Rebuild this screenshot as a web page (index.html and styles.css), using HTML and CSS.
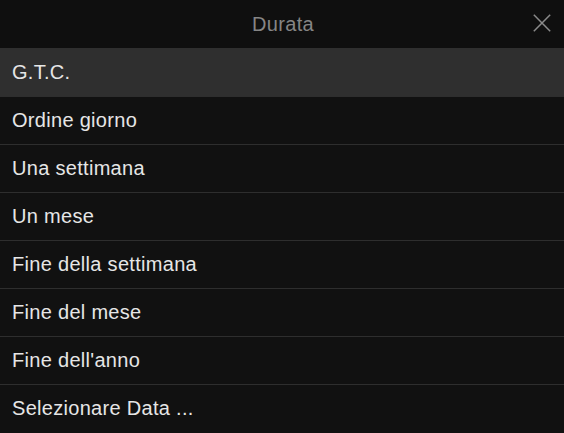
FILE: index.html
```html
<!DOCTYPE html>
<html lang="it">
<head>
<meta charset="utf-8">
<link rel="stylesheet" href="styles.css">
</head>
<body>
<div class="dialog">
  <header class="head">
    <span class="title">Durata</span>
    <button class="close" aria-label="Chiudi">
      <svg width="18" height="18" viewBox="0 0 18 18"><path d="M0.8 0.8 L17.2 17.2 M17.2 0.8 L0.8 17.2" stroke="#8a8a8a" stroke-width="1.5" fill="none"/></svg>
    </button>
  </header>
  <ul class="list">
    <li class="item selected">G.T.C.</li>
    <li class="item">Ordine giorno</li>
    <li class="item">Una settimana</li>
    <li class="item">Un mese</li>
    <li class="item">Fine della settimana</li>
    <li class="item">Fine del mese</li>
    <li class="item">Fine dell'anno</li>
    <li class="item">Selezionare Data ...</li>
  </ul>
</div>
</body>
</html>
```
FILE: styles.css
```css
html, body {
  margin: 0;
  padding: 0;
  background: #111111;
}
body {
  font-family: "Liberation Sans", Arial, sans-serif;
}
.dialog {
  width: 564px;
  background: #111111;
}
.head {
  height: 48px;
  display: flex;
  align-items: center;
  justify-content: center;
  position: relative;
  background: #0f0f0f;
}
.title {
  color: #858585;
  font-size: 20px;
  letter-spacing: 0.3px;
  padding-left: 2px;
}
.close {
  position: absolute;
  right: 13px;
  top: 14px;
  width: 18px;
  height: 18px;
  padding: 0;
  border: 0;
  background: none;
  display: flex;
}
.list {
  list-style: none;
  margin: 0;
  padding: 0;
}
.item {
  height: 47px;
  display: flex;
  align-items: center;
  padding-left: 12px;
  color: #e6e6e6;
  font-size: 20px;
  letter-spacing: 0.3px;
  border-top: 1px solid #2e2e2e;
}
.item:first-child {
  border-top: 0;
  height: 48px;
}
.selected {
  background: #2f2f2f;
}
```
